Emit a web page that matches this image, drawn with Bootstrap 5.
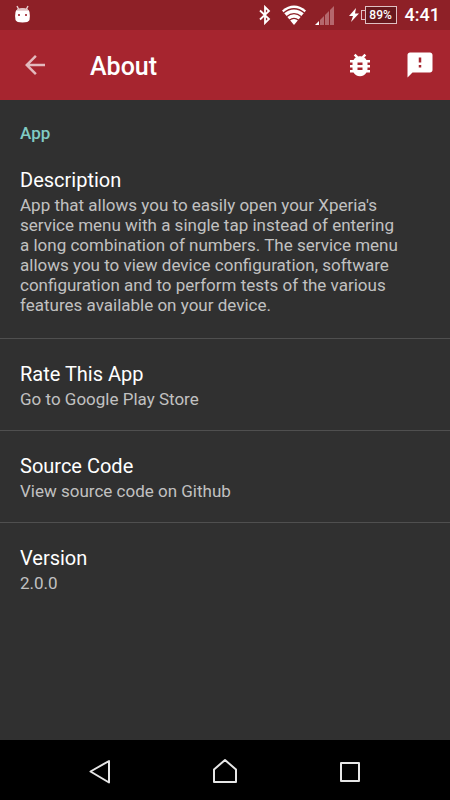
<!DOCTYPE html>
<html lang="en" data-bs-theme="dark">
<head>
<meta charset="utf-8">
<meta name="viewport" content="width=device-width, initial-scale=1">
<title>About</title>
<link href="https://cdn.jsdelivr.net/npm/bootstrap@5.3.0/dist/css/bootstrap.min.css" rel="stylesheet">
<style>
  body { font-family: Roboto, "Liberation Sans", sans-serif; background: #303030; color: #fff; }
  svg { display: block; }
  .status-bar { height: 30px; background: #8e2027; padding: 0 10px 0 12px; }
  .clock { font-size: 18px; line-height: 30px; font-weight: 500; }
  .battery-level { border: 1px solid #e0c0c3; height: 18px; width: 32px; font-size: 12px; line-height: 16px; font-weight: 500; background: #69191e; }
  .battery-tip { width: 4px; height: 10px; border: 1px solid #e0c0c3; border-right: 0; }
  .app-bar { height: 70px; background: #a6252f; padding-left: 5px; }
  .bar-button { width: 60px; height: 60px; }
  .screen-title { font-size: 25px; line-height: 30px; font-weight: 500; margin-left: 25px; padding-top: 3px; }
  .section-title { font-size: 17px; line-height: 20px; font-weight: 500; color: #80cbc4; padding: 23px 20px 2px; }
  .pref { display: block; color: #fff; text-decoration: none; padding: 23px 20px 21px; border-bottom: 1px solid #4f4f4f; }
  .pref:last-child { border-bottom: 0; }
  .pref-long { padding-bottom: 23px; }
  .pref-title { font-size: 20px; line-height: 24px; font-weight: 400; }
  .pref-text { font-size: 17px; line-height: 20px; color: #c1c1c1; padding: 3px 28px 0 0; }
  .nav-keys { height: 60px; background: #000; }
  .nav-key { width: 125px; height: 60px; }
</style>
</head>
<body class="d-flex flex-column min-vh-100">
<header>
  <div class="status-bar d-flex align-items-center">
    <svg width="20" height="24" viewBox="0 0 20 24" aria-hidden="true">
      <path d="M5 3l2 4M16 3l-2 4" stroke="#e8cfd1" stroke-width="1.4"/>
      <path d="M3.500 9Q4 5.500 10.500 5.500T17.500 9Q18.300 13 17.500 17Q16.500 19.500 10.500 19.500T3.500 17Q2.700 13 3.500 9Z" fill="#fff"/>
      <path d="M4 7.800Q6 5 10.500 5T17 7.800Z" fill="#e3c4c6"/>
      <path d="M6 11h2v2H6zM13 11h2v2h-2z" fill="#b24b54"/>
    </svg>
    <div class="d-flex align-items-center ms-auto">
      <svg width="12" height="20" viewBox="0 0 12 20" aria-hidden="true"><path d="M1 5.500l9 8.500-4 4V2l4 4-9 8.500" fill="none" stroke="#fff" stroke-width="1.800"/></svg>
      <svg class="ms-2" width="30" height="22" viewBox="0 0 30 22" aria-hidden="true">
        <path d="M3 6.500Q15-3.500 27 6.500L15 21Z" fill="#fff"/>
        <path d="M4.500 9Q15 .500 25.500 9M7.500 12.800Q15 6.500 22.500 12.800M10.300 16.200Q15 12.500 19.700 16.200" fill="none" stroke="#8e2027" stroke-width="1.300"/>
      </svg>
      <svg class="ms-1" width="26" height="20" viewBox="0 0 26 20" aria-hidden="true">
        <path d="M2 20l4-4v4z" fill="#fff"/>
        <path d="M7 20v-5l4-4v9zM12 20V10l4-4v14zM17 20V5l4-4v19z" fill="#b5676d"/>
      </svg>
      <svg class="ms-2" width="14" height="18" viewBox="0 0 14 18" aria-hidden="true"><path d="M9 2L2 10h4L4 16l8-8.500H8z" fill="#fff"/></svg>
      <div class="battery-tip"></div>
      <div class="battery-level text-center">89%</div>
      <div class="clock ms-2">4:41</div>
    </div>
  </div>
  <nav class="app-bar d-flex align-items-center">
    <button type="button" class="bar-button btn border-0 p-0 d-flex align-items-center justify-content-center" aria-label="Back">
      <svg width="30" height="30" viewBox="0 0 24 24"><path d="M20 11H7.830l5.590-5.590L12 4l-8 8 8 8 1.410-1.410L7.830 13H20v-2z" fill="#e3b9bd"/></svg>
    </button>
    <h1 class="screen-title mb-0">About</h1>
    <button type="button" class="bar-button btn border-0 p-0 d-flex align-items-center justify-content-center ms-auto" aria-label="Report a bug">
      <svg width="30" height="30" viewBox="0 0 24 24"><path d="M20 8h-2.810c-.450-.780-1.070-1.450-1.820-1.960L17 4.410 15.590 3l-2.170 2.170C12.960 5.060 12.490 5 12 5s-.960.060-1.410.170L8.410 3 7 4.410l1.620 1.630C7.880 6.550 7.260 7.220 6.810 8H4v2h2.090c-.050.330-.090.660-.090 1v1H4v2h2v1c0 .340.040.670.090 1H4v2h2.810c1.040 1.790 2.970 3 5.190 3s4.150-1.210 5.190-3H20v-2h-2.090c.050-.330.090-.660.090-1v-1h2v-2h-2v-1c0-.340-.040-.670-.090-1H20V8zm-6 8h-4v-2h4v2zm0-4h-4v-2h4v2z" fill="#fff"/></svg>
    </button>
    <button type="button" class="bar-button btn border-0 p-0 d-flex align-items-center justify-content-center" aria-label="Send feedback">
      <svg width="30" height="30" viewBox="0 0 24 24"><path d="M20 2H4c-1.100 0-1.990.900-1.990 2L2 22l4-4h14c1.100 0 2-.900 2-2V4c0-1.100-.900-2-2-2zm-7 12h-2v-2h2v2zm0-4h-2V6h2v4z" fill="#fff"/></svg>
    </button>
  </nav>
</header>
<main class="flex-grow-1">
  <h2 class="section-title mb-0">App</h2>
  <div>
    <div class="pref pref-long">
      <h3 class="pref-title mb-0">Description</h3>
      <p class="pref-text mb-0">App that allows you to easily open your Xperia's service menu with a single tap instead of entering a long combination of numbers. The service menu allows you to view device configuration, software configuration and to perform tests of the various features available on your device.</p>
    </div>
    <a class="pref" href="#rate">
      <h3 class="pref-title mb-0">Rate This App</h3>
      <p class="pref-text mb-0">Go to Google Play Store</p>
    </a>
    <a class="pref" href="#source">
      <h3 class="pref-title mb-0">Source Code</h3>
      <p class="pref-text mb-0">View source code on Github</p>
    </a>
    <div class="pref">
      <h3 class="pref-title mb-0">Version</h3>
      <p class="pref-text mb-0">2.0.0</p>
    </div>
  </div>
</main>
<footer class="nav-keys d-flex justify-content-center">
  <button type="button" class="nav-key btn border-0 p-0 d-flex align-items-center justify-content-center" aria-label="Back">
    <svg width="30" height="30" viewBox="0 0 30 30"><path d="M5.500 16.500L24 6v21.500z" fill="none" stroke="#e6e6e6" stroke-width="2" stroke-linejoin="round"/></svg>
  </button>
  <button type="button" class="nav-key btn border-0 p-0 d-flex align-items-center justify-content-center" aria-label="Home">
    <svg width="30" height="30" viewBox="0 0 30 30"><path d="M4 14.500L15 5l11 9.500V27H4z" fill="none" stroke="#e6e6e6" stroke-width="2" stroke-linejoin="round"/></svg>
  </button>
  <button type="button" class="nav-key btn border-0 p-0 d-flex align-items-center justify-content-center" aria-label="Recent apps">
    <svg width="30" height="30" viewBox="0 0 30 30"><path d="M6 8h18v18H6z" fill="none" stroke="#e6e6e6" stroke-width="2" stroke-linejoin="round"/></svg>
  </button>
</footer>
</body>
</html>
